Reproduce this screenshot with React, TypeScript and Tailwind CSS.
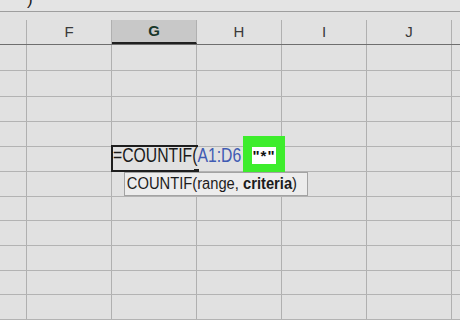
import React from "react";

const columns = ["F", "G", "H", "I", "J"];

// row heights so the grid lines land where the sheet draws them
const rowHeights = [
  "h-[26px]",
  "h-[26px]",
  "h-[25px]",
  "h-[25px]",
  "h-[25px]",
  "h-[25px]",
  "h-[24px]",
  "h-[25px]",
  "h-[25px]",
  "h-[24px]",
  "h-[25px]",
];

export default function App() {
  return (
    <div className="relative w-[460px] h-[320px] overflow-hidden bg-[#e1e1e1] font-['Liberation_Sans',Arial,sans-serif] text-[#262626]">
      {/* formula bar, mostly cut off */}
      <div className="relative h-[12px] border-b border-[#9e9e9e] bg-[#e4e4e4] overflow-hidden">
        <span className="absolute left-[27px] -top-[9px] text-[17px] leading-none text-[#1a1a1a]">)</span>
      </div>

      {/* column headers */}
      <div className="flex h-[33px] border-b border-[#6e6e6e]">
        <div className="w-[27px] shrink-0 pt-[8px]">
          <div className="h-full border-r border-[#b0b0b0]" />
        </div>
        {columns.map((col) => (
          <div key={col} className="w-[85px] shrink-0 pt-[8px]">
            {col === "G" ? (
              <div className="h-full flex items-center justify-center border-r border-[#b0b0b0] bg-[#c8c8c8] border-b-2 border-b-[#1f1f1f] text-[15px] font-bold text-[#17372a]">
                {col}
              </div>
            ) : (
              <div className="h-full flex items-center justify-center border-r border-[#b0b0b0] text-[15px] text-[#3a3a3a]">
                {col}
              </div>
            )}
          </div>
        ))}
        <div className="flex-1" />
      </div>

      {/* grid body */}
      <div>
        {rowHeights.map((h, r) => (
          <div key={r} className={`flex ${h} border-b border-[#b3b3b3]`}>
            <div className="w-[27px] shrink-0 border-r border-[#b0b0b0]" />
            {columns.map((col) => (
              <div key={col} className="w-[85px] shrink-0 border-r border-[#b0b0b0]" />
            ))}
            <div className="flex-1" />
          </div>
        ))}
      </div>

      {/* active cell being edited */}
      <div className="absolute left-[111px] top-[145px] w-[87px] h-[27px] border-2 border-r-0 border-[#1e1e1e]" />
      <div className="absolute left-[113px] top-[147px] w-[130px] h-[23px] bg-[#e1e1e1]" />
      <div className="absolute left-[113px] top-[144px] whitespace-nowrap text-[21px] leading-none origin-left scale-x-[0.75]">
        <span className="text-[#1a1a1a]">=COUNTIF(</span>
        <span className="text-[#3f5bb3]">A1:D6</span>
      </div>
      <div className="absolute left-[194px] top-[169px] w-[5px] h-[4px] bg-[#1e1e1e]" />

      {/* highlighted criteria */}
      <div className="absolute left-[243px] top-[136px] w-[42px] h-[39px] bg-[#3ded2c] flex items-center justify-center">
        <div className="w-[24px] h-[17px] bg-white flex items-center justify-center text-[15px] font-bold leading-none tracking-[1px] text-[#111]">
          "*"
        </div>
      </div>

      {/* function tooltip */}
      <div className="absolute left-[124px] top-[172px] w-[184px] h-[24px] bg-[#ececec] border border-[#a3a3a3] flex items-center">
        <div className="pl-[2px] whitespace-nowrap text-[16px] leading-none origin-left scale-x-[0.92] text-[#1c1c1c]">
          COUNTIF(range, <span className="font-bold">criteria</span>)
        </div>
      </div>
    </div>
  );
}
